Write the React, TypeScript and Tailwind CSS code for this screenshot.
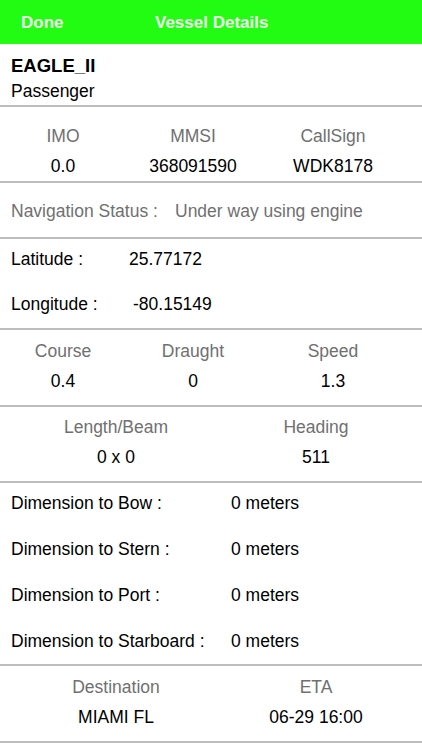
import React from "react";

const font = { fontFamily: '"Liberation Sans", Arial, sans-serif' };

function Divider() {
  return <div className="h-[2px] w-full bg-[#bebebe]" />;
}

function Cell({ w, label, value }: { w: string; label: string; value: string }) {
  return (
    <div className={`${w} flex flex-col items-center`}>
      <div className="text-[17.5px] leading-[20px] text-[#707070]">{label}</div>
      <div className="mt-[10px] text-[17.5px] leading-[20px] text-black">{value}</div>
    </div>
  );
}

export default function App() {
  return (
    <div className="w-[422px] h-[750px] bg-white overflow-hidden" style={font}>
      <div className="h-[44px] bg-[#22fc12] flex items-center pt-[2px]">
        <div className="pl-[21px] w-[155px] text-[17px] font-semibold text-[#eefcec]">Done</div>
        <div className="text-[17px] font-semibold text-[#eefcec]">Vessel Details</div>
      </div>
      <div className="h-[61px] pl-[11px] pt-[10px]">
        <div className="text-[18.5px] leading-[24px] font-bold text-black">EAGLE_II</div>
        <div className="text-[17.5px] leading-[20px] mt-[3px] text-black">Passenger</div>
      </div>
      <Divider />
      <div className="h-[74px] flex pt-[19px]">
        <Cell w="w-[126px]" label="IMO" value="0.0" />
        <Cell w="w-[134px]" label="MMSI" value="368091590" />
        <Cell w="w-[146px]" label="CallSign" value="WDK8178" />
      </div>
      <Divider />
      <div className="h-[54px] flex items-center pt-[3px] pl-[11px] text-[17.5px] text-[#707070]">
        <span className="w-[164px]">Navigation Status :</span>
        <span>Under way using engine</span>
      </div>
      <Divider />
      <div className="h-[89px] pl-[11px] pt-[10px] text-[17.5px] leading-[20px] text-black">
        <div className="flex">
          <span className="w-[118px]">Latitude :</span>
          <span>25.77172</span>
        </div>
        <div className="flex mt-[25px]">
          <span className="w-[122px]">Longitude :</span>
          <span>-80.15149</span>
        </div>
      </div>
      <Divider />
      <div className="h-[75px] flex pt-[11px]">
        <Cell w="w-[126px]" label="Course" value="0.4" />
        <Cell w="w-[134px]" label="Draught" value="0" />
        <Cell w="w-[146px]" label="Speed" value="1.3" />
      </div>
      <Divider />
      <div className="h-[74px] flex pt-[10px]">
        <Cell w="w-[232px]" label="Length/Beam" value="0 x 0" />
        <Cell w="w-[168px]" label="Heading" value="511" />
      </div>
      <Divider />
      <div className="h-[181px] pl-[11px] pt-[10px] flex flex-col gap-[26px] text-[17.5px] leading-[20px] text-black">
        {[
          ["Dimension to Bow :", "0 meters"],
          ["Dimension to Stern :", "0 meters"],
          ["Dimension to Port :", "0 meters"],
          ["Dimension to Starboard :", "0 meters"],
        ].map(([l, v]) => (
          <div key={l} className="flex">
            <span className="w-[220px]">{l}</span>
            <span>{v}</span>
          </div>
        ))}
      </div>
      <Divider />
      <div className="h-[75px] flex pt-[11px]">
        <Cell w="w-[232px]" label="Destination" value="MIAMI FL" />
        <Cell w="w-[168px]" label="ETA" value="06-29 16:00" />
      </div>
      <Divider />
    </div>
  );
}
